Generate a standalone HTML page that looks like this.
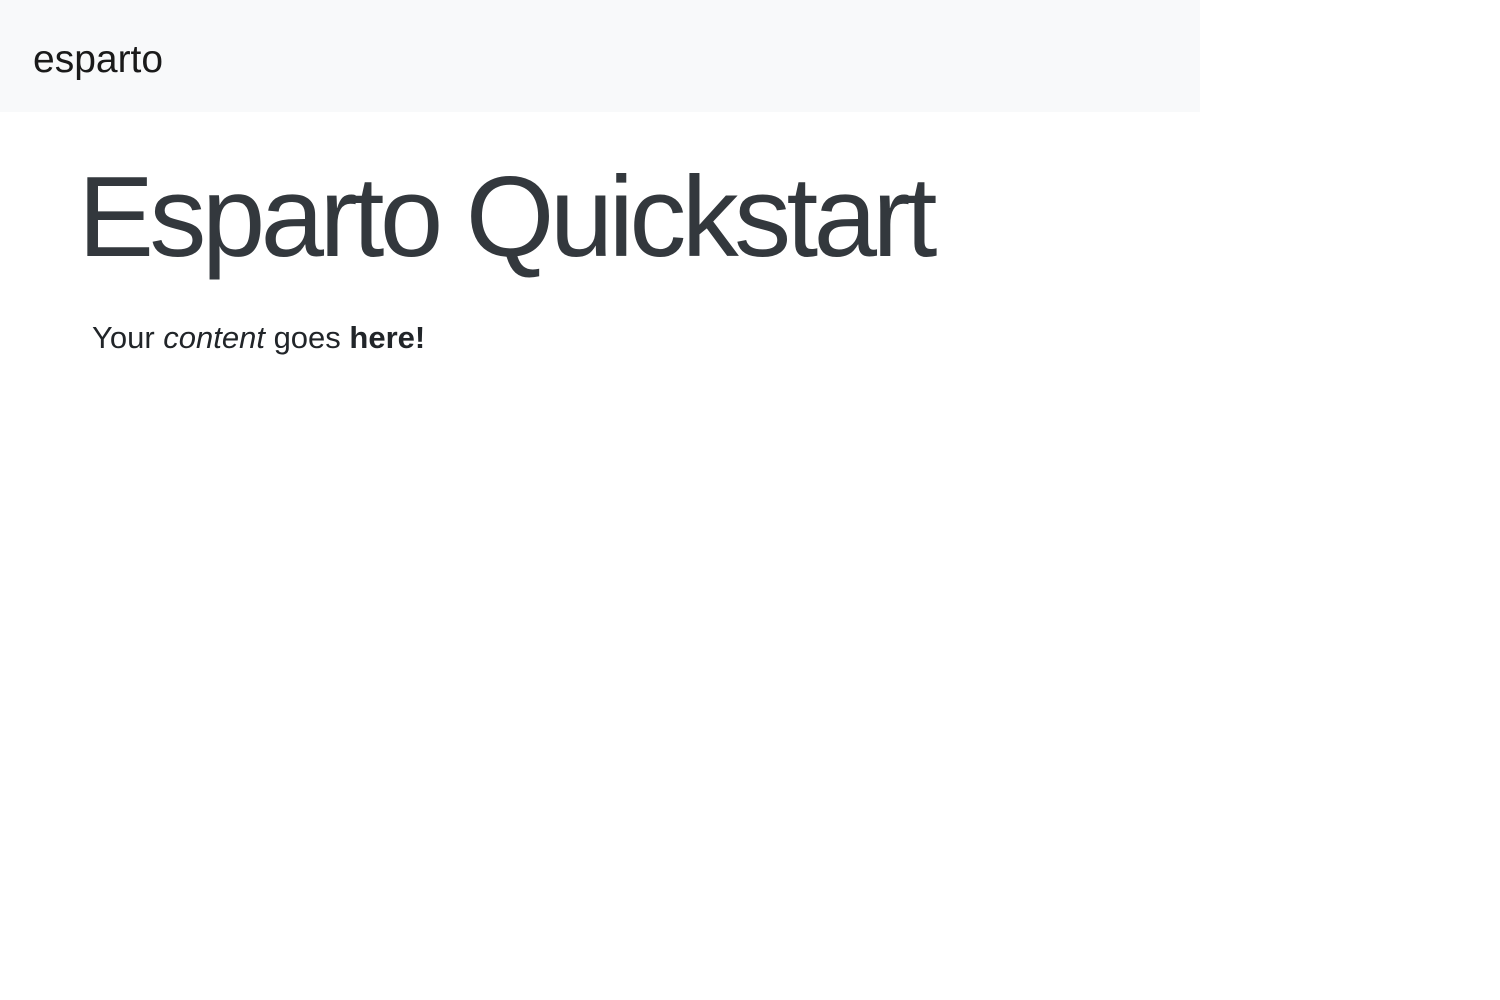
<!DOCTYPE html>
<html><head><meta charset="utf-8"><style>
html,body{margin:0;padding:0;background:#fff;width:1500px;height:1000px;overflow:hidden;font-family:"Liberation Sans",sans-serif;color:#212529}
.nav{position:absolute;left:0;top:0;width:1200px;height:112px;background:#f8f9fa}
.brand{position:absolute;left:33px;top:40px;font-size:39px;line-height:1;color:#1a1a1a}
h1{position:absolute;left:78px;top:161px;margin:0;font-weight:normal;font-size:114px;line-height:1;letter-spacing:-4.6px;color:#33383d}
p{position:absolute;left:92px;top:319px;margin:0;font-size:31px;line-height:1.2}
</style></head><body>
<div class="nav"><div class="brand">esparto</div></div>
<h1>Esparto Quickstart</h1>
<p>Your <em>content</em> goes <strong>here!</strong></p>
</body></html>
